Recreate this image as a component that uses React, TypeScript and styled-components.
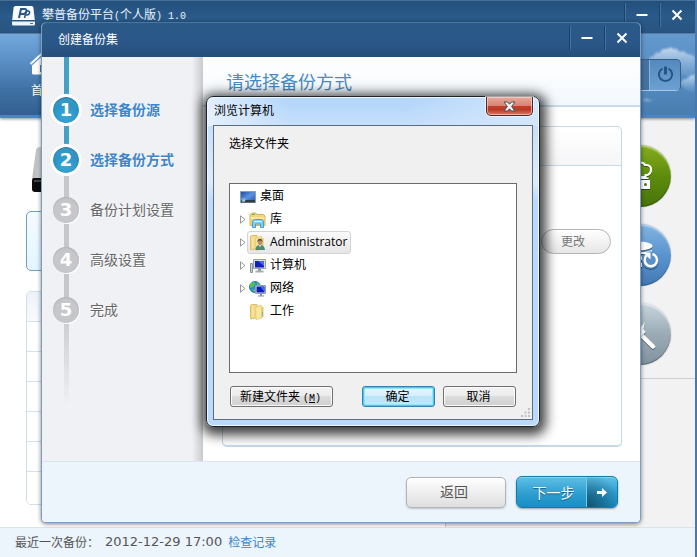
import React from "react";
import styled, { createGlobalStyle, css } from "styled-components";

const sans = `"DejaVu Sans", "Noto Sans CJK SC", sans-serif`;
const treeFont = `"Open Sans", "Noto Sans CJK SC", sans-serif`;
const cjk = `"Noto Sans CJK SC", sans-serif`;

const GlobalStyle = createGlobalStyle`
  *, *::before, *::after { box-sizing: border-box; }
  body { margin: 0; font-family: ${cjk}; font-size: 12px; line-height: 18px; color: #000; }
  button { font: inherit; color: inherit; margin: 0; padding: 0; border: 0; background: none; cursor: pointer; }
  h1, h2, p, ol, ul { margin: 0; padding: 0; font-weight: normal; font-size: inherit; }
  ol, ul { list-style: none; }
  svg { display: block; flex: none; }
`;

const Mono = styled.span`
  font-family: "Liberation Mono", monospace;
  font-size: 10px;
  white-space: pre;
`;

/* ---------- main window ---------- */

const AppWindow = styled.div`
  position: relative;
  display: flex;
  flex-direction: column;
  min-height: 100vh;
  background: #fff;
  border-right: 2px solid #4878ae;
  overflow: hidden;
`;

const TitleBar = styled.header`
  display: flex;
  align-items: center;
  height: 34px;
  padding: 0 1px 2px 12px;
  gap: 7px;
  color: #e8f2fc;
  background: linear-gradient(#6d8fb4 0, #234f7b 1px, #2a5a8a 50%, #29547f);
  border-bottom: 1px solid #5c86b3;
`;

const WindowTitle = styled.h1`
  flex: 1;
`;

const WindowControls = styled.div`
  display: flex;
  padding-bottom: 2px;
`;

const ControlButton = styled.button`
  display: flex;
  align-items: center;
  justify-content: center;
  width: 35px;
  height: 24px;
  padding-right: 1px;
  color: #fff;
  border-left: 1px solid #1c4168;
  box-shadow: inset 1px 0 #4273a4;
`;

const NavBar = styled.nav`
  display: flex;
  align-items: center;
  justify-content: space-between;
  position: relative;
  height: 84px;
  padding: 0 14px 0 29px;
  background: linear-gradient(#72a8dc, #5d92c8 30%, #3f70a4 70%, #345f90);
  border-bottom: 3px solid #4387cb;
  box-shadow: 0 1px 3px rgba(0, 0, 0, 0.45);
`;

const Sky = styled.div`
  position: absolute;
  inset: 0 0 0 auto;
  width: 160px;
  background: linear-gradient(#6499ce, #548abf 60%, #497daf);
  svg { width: 100%; height: 100%; }
`;

const HomeButton = styled.button`
  display: flex;
  flex-direction: column;
  align-items: center;
  gap: 6px;
  color: #fff;
`;

const SessionControls = styled.div`
  position: relative;
  display: flex;
  width: 90px;
  height: 32px;
  justify-content: flex-end;
  background: #4472a0;
  border: 1px solid #365f8a;
  border-bottom-color: #a7c7e6;
  border-radius: 5px;
  overflow: hidden;
`;

const PowerButton = styled.button`
  display: flex;
  align-items: center;
  justify-content: center;
  width: 31px;
  border-left: 1px solid #8db4da;
  background: linear-gradient(#5489bf, #6da0d2);
  color: #245585;
`;

const Workspace = styled.div`
  flex: 1;
  display: flex;
`;

const Overview = styled.main`
  flex: 1;
  padding: 29px 20px 22px 26px;
`;

const DeviceRow = styled.div`
  height: 45px;
  padding-left: 6px;
`;

const SummaryCard = styled.div`
  height: 60px;
  margin-top: 19px;
  border: 1px solid #6d9fcd;
  border-radius: 5px;
  background: linear-gradient(#f4fbff, #e4f5ff);
`;

const PlanList = styled.div`
  margin-top: 20px;
  border: 1px solid #d0e0ea;
  border-radius: 5px;
  overflow: hidden;
`;

const PlanRow = styled.div<{ $head?: boolean }>`
  height: 30px;
  border-bottom: 1px solid #d3e2ea;
  background: ${(p) => (p.$head ? "linear-gradient(#eef2f8, #f8fafc)" : "#fff")};
  &:last-child { height: 32px; border-bottom: 0; }
`;

const ActionPanel = styled.aside`
  width: 250px;
  border-left: 1px solid #c5c9ce;
  background: #f2f2f2;
`;

const ActionList = styled.div`
  display: flex;
  flex-direction: column;
  align-items: flex-end;
  gap: 17px;
  padding: 27px 24px 13px 0;
  border-bottom: 1px solid #cfcfcf;
`;

const tones = {
  green: "linear-gradient(#86ad1c, #5d8c0c 50%, #48730a)",
  blue: "linear-gradient(#83b4e0, #5a94cf 50%, #4279b5)",
  gray: "linear-gradient(#c8d5dd, #9aabb6 50%, #7f929f)",
};

const RoundAction = styled.button<{ $tone: keyof typeof tones }>`
  display: flex;
  align-items: center;
  justify-content: center;
  width: 62px;
  height: 62px;
  border-radius: 50%;
  background: ${(p) => tones[p.$tone]};
  box-shadow: inset 0 2px 1px rgba(255, 255, 255, 0.4), inset 0 -1px 1px rgba(0, 0, 0, 0.3), 0 0 2px rgba(0, 0, 0, 0.2);
  svg { filter: drop-shadow(0 1px 0 rgba(0, 0, 0, 0.45)); }
`;

const StatusBar = styled.footer`
  display: flex;
  align-items: center;
  height: 30px;
  padding: 0 15px 2px;
  gap: 6px;
  background: #ecf4fc;
  border-top: 1px solid #d9e4ee;
  color: #555;
`;

const StatusTime = styled.time`
  font-family: ${sans};
  font-size: 13px;
`;

const StatusLink = styled.a`
  color: #3a85cc;
  text-decoration: none;
`;

/* ---------- wizard ---------- */

const Wizard = styled.section`
  position: absolute;
  inset: 22px 54px 34px 41px;
  display: flex;
  flex-direction: column;
  border: 1px solid #7b9fc4;
  border-top-color: #4a76a4;
  border-radius: 5px;
  overflow: hidden;
  background: #fff;
  box-shadow: 0 1px 4px rgba(0, 0, 0, 0.5);
`;

const WizardHeader = styled.header`
  display: flex;
  align-items: center;
  height: 34px;
  flex: none;
  padding: 0 1px 2px 16px;
  color: #fff;
  background: linear-gradient(#2a5a88, #2a5788 60%, #264e79);
`;

const WizardBody = styled.div`
  flex: 1;
  display: flex;
`;

const Sidebar = styled.nav`
  width: 161px;
  background: linear-gradient(90deg, transparent 150px, #c9cacd), #eff1f5;
`;

const Steps = styled.ol`
  display: flex;
  flex-direction: column;
  height: 348px;
  padding: 28px 0 0 8px;
  background: linear-gradient(#45a0c6 103px, #c6c7ca 103px, #c6c7ca 250px, rgba(198, 199, 202, 0)) 22px 0 / 5px 100% no-repeat;
`;

const Step = styled.li<{ $done?: boolean }>`
  display: flex;
  align-items: center;
  height: 50px;
  gap: 8px;
  font-size: 14px;
  color: #666;
  text-shadow: 0 1px #fff;
  ${(p) => p.$done && css`
    color: #3d86ca;
    font-weight: bold;
  `}
`;

const StepLabel = styled.span`
  padding-bottom: 2px;
`;

const StepNumber = styled.span<{ $done?: boolean }>`
  display: flex;
  align-items: center;
  justify-content: center;
  width: 32px;
  height: 32px;
  border: 3px solid ${(p) => (p.$done ? "#fff" : "transparent")};
  border-radius: 50%;
  font: bold 18px/26px "DejaVu Sans", sans-serif;
  color: #fff;
  background: ${(p) => (p.$done ? "radial-gradient(circle at 50% 75%, #37a8d8, #2b94c5 55%, #52a9cc)" : "#c6c7cb")} padding-box;
  box-shadow: ${(p) => (p.$done ? "0 0 1px #d5dbe2, inset 0 1px 2px rgba(0, 70, 110, 0.5)" : "inset 0 1px 1px #b3b4b8")};
  ${(p) => !p.$done && css`
    width: 26px;
    height: 26px;
    margin: 0 3px;
    border: 0;
    box-shadow: inset 0 1px 2px #b0b1b5, 1px 1px #fff;
  `}
  text-shadow: none;
`;

const Content = styled.div`
  flex: 1;
  display: flex;
  flex-direction: column;
`;

const ContentTitle = styled.h2`
  height: 50px;
  padding: 11px 0 0 23px;
  font-size: 18px;
  line-height: 26px;
  color: #4a8bc5;
  background: linear-gradient(#fff, #f2f8fd);
  border-bottom: 2px solid #c9dbe9;
`;

const OptionPanel = styled.div`
  flex: 1;
  margin: 19px 18px 14px 19px;
  border: 1px solid #c6d9e8;
  border-bottom-width: 2px;
  border-radius: 5px;
`;

const OptionHead = styled.div`
  height: 39px;
  border-radius: 5px 5px 0 0;
  background: linear-gradient(#fff, #f6f6f8);
  border-bottom: 1px solid #c9d9e7;
`;

const OptionRow = styled.div`
  display: flex;
  justify-content: flex-end;
  padding: 63px 10px 0 0;
`;

const PillButton = styled.button`
  width: 70px;
  height: 25px;
  padding: 0 6px 2px 0;
  border: 1px solid #b5b5b5;
  border-radius: 13px;
  background: linear-gradient(#fff, #e6e6e6);
  color: #777;
`;

const WizardFooter = styled.footer`
  display: flex;
  justify-content: flex-end;
  align-items: center;
  flex: none;
  gap: 10px;
  height: 61px;
  padding-right: 22px;
  background: #ecf4fc;
  border-top: 1px solid #dce4ec;
`;

const BackButton = styled.button`
  width: 100px;
  height: 31px;
  padding: 0 4px 2px 0;
  border: 1px solid #b4b4b4;
  border-radius: 5px;
  background: linear-gradient(#fff, #dedede);
  box-shadow: 0 1px 2px rgba(0, 0, 0, 0.2);
  font-size: 14px;
  color: #555;
`;

const NextButton = styled.button`
  display: flex;
  width: 102px;
  height: 32px;
  border: 1px solid #147ba8;
  border-radius: 6px;
  overflow: hidden;
  background: linear-gradient(#5fbfe6, #2f9ed0 55%, #178fc4);
  box-shadow: 0 1px 2px rgba(0, 0, 0, 0.35), inset 0 1px #86d2ef;
  color: #fff;
  font-size: 14px;
  line-height: 30px;
  text-shadow: 0 1px 1px #0d5f86;
`;

const NextLabel = styled.span`
  flex: 1;
  padding-left: 4px;
`;

const NextArrow = styled.span`
  display: flex;
  align-items: center;
  justify-content: center;
  width: 31px;
  height: 30px;
  border-left: 1px solid #7ccaea;
  background: radial-gradient(circle at 0 100%, #12536f, rgba(18, 83, 111, 0) 34px);
`;

/* ---------- folder dialog ---------- */

const Dialog = styled.section`
  position: absolute;
  top: 96px;
  left: 206px;
  width: 334px;
  padding: 0 6px 6px;
  border: 1px solid #1c232b;
  border-radius: 7px;
  background:
    linear-gradient(90deg, #e3f0ff, rgba(200, 225, 252, 0) 25%, rgba(200, 225, 252, 0) 60%, #d3e7fd) top / 100% 29px no-repeat,
    linear-gradient(#b0d4fa, #c6dffb 28px, #dcecfd 85px, #b9d9fd 105px, #b9d9fd);
  box-shadow: inset 0 0 0 1px #eef7ff, 1px 3px 12px 5px rgba(0, 0, 0, 0.75);
`;

const DialogHeader = styled.header`
  display: flex;
  justify-content: space-between;
  height: 28px;
`;

const DialogTitle = styled.h2`
  padding: 4px 1px;
`;

const CloseButton = styled.button`
  display: flex;
  align-items: center;
  justify-content: center;
  width: 47px;
  height: 19px;
  border: 1px solid #56222a;
  border-top: 0;
  border-radius: 0 0 5px 5px;
  background: linear-gradient(#e9aa9d, #d88373 48%, #c3402b 50%, #b93a25 70%, #dd7a62);
  box-shadow: inset 0 0 0 1px rgba(255, 220, 210, 0.6), 0 0 0 1px rgba(255, 255, 255, 0.6);
`;

const DialogBody = styled.div`
  display: flex;
  flex-direction: column;
  position: relative;
  padding: 8px 15px 12px;
  border: 1px solid #5d6b7a;
  background: #f0f0f0;
`;

const Prompt = styled.p`
  height: 49px;
`;

const Tree = styled.ul`
  height: 190px;
  padding: 1px 0 0 10px;
  border: 1px solid #6a6c70;
  background: #fff;
`;

const TreeRow = styled.li<{ $child?: boolean }>`
  display: flex;
  align-items: center;
  height: 23px;
  gap: ${(p) => (p.$child ? "1px" : "0")};
`;

const Expander = styled.button`
  width: 6px;
  height: 9px;
`;

const ExpanderGap = styled.span`
  width: 6px;
`;

const TreeItem = styled.button<{ $root?: boolean; $selected?: boolean }>`
  display: flex;
  align-items: center;
  gap: 4px;
  height: 23px;
  padding: ${(p) => (p.$root ? "0" : "0 3px 0 1px")};
  border: 1px solid transparent;
  border-width: ${(p) => (p.$root ? "0" : "1px")};
  border-radius: 3px;
  font-family: ${treeFont};
  ${(p) => p.$selected && css`
    border-color: #d5d5d5;
    background: linear-gradient(#fafafa, #e6e6e6);
  `}
`;

const TreeLabel = styled.span`
  padding-bottom: 2px;
`;

const DialogActions = styled.div`
  display: flex;
  gap: 8px;
  margin-top: 13px;
  padding: 0 1px;
`;

const DialogButton = styled.button<{ $wide?: boolean; $primary?: boolean }>`
  width: ${(p) => (p.$wide ? "103px" : "73px")};
  height: 21px;
  padding: 0 2px 1px 0;
  line-height: 18px;
  border: 1px solid ${(p) => (p.$primary ? "#3c7fb1" : "#707070")};
  border-radius: 3px;
  background: ${(p) =>
    p.$primary
      ? "linear-gradient(#e6f6fe, #d5effc 50%, #b9e3f8 50%, #c3e9fa)"
      : "linear-gradient(#f3f3f3, #ebebeb 50%, #dddddd 50%, #cfcfcf)"};
  box-shadow: ${(p) => (p.$primary ? "inset 0 0 0 1px #43cdf3, inset 0 0 0 2px #9be3f8" : "inset 0 0 0 1px #fbfbfb")};
  &:first-child { margin-right: auto; }
`;

const ShortcutHint = styled(Mono)`
  margin-left: 3px;
`;

const ResizeGrip = styled.div`
  position: absolute;
  right: 2px;
  bottom: 2px;
`;

/* ---------- icons ---------- */

const LogoIcon = () => (
  <svg width="23" height="20" viewBox="0 0 23 20" aria-hidden="true">
    <path d="M3.5 0h16q1.6 0 1.9 1.6L22.8 14H.2L1.6 1.6Q1.900 0 3.500 0Z" fill="#f7fbff" />
    <path d="M0 15.500h23v2.500q0 1.500-1.500 1.500h-20Q0 19.500 0 18Z" fill="#edf5fc" />
    <path d="M18 17h3v1h-3z" fill="#4d7ba8" />
    <path d="M7 12 9 3h3.500q2.500 0 2 2.300T11.500 8H8.500" fill="none" stroke="#275484" strokeWidth="2" />
    <path d="M12.500 12 14 6m0-1h2q2 0 1.500 2T15 9h-2" fill="none" stroke="#275484" strokeWidth="1.500" />
  </svg>
);

const MinusIcon = () => (
  <svg width="12" height="12" viewBox="0 0 12 12" aria-hidden="true">
    <path d="M0.500 6h11" stroke="#fff" strokeWidth="2" />
  </svg>
);

const CrossIcon = () => (
  <svg width="12" height="12" viewBox="0 0 12 12" aria-hidden="true">
    <path d="M1.500 1.500l9 9M10.500 1.500l-9 9" stroke="#fff" strokeWidth="2" />
  </svg>
);

const HomeIcon = () => (
  <svg width="28" height="24" viewBox="0 0 28 24" aria-hidden="true">
    <path d="M1.500 13 14 1.500 26.500 13" fill="none" stroke="#fff" strokeWidth="2" />
    <path d="M3 14.500 14 4.500l11 10V22q0 1.500-1.500 1.500h-19Q3 23.500 3 22Z" fill="#fff" />
    <path d="M11 14h6v7h-6z" fill="#4a7db2" />
  </svg>
);

const Clouds = () => (
  <svg viewBox="0 0 160 81" preserveAspectRatio="none" aria-hidden="true">
    <defs>
      <filter id="soft" x="-20%" y="-20%" width="140%" height="140%">
        <feGaussianBlur stdDeviation="0.900" />
      </filter>
      <linearGradient id="cloud" x2="0" y2="1">
        <stop stopColor="#cfe1f2" stopOpacity="0.900" />
        <stop offset="1" stopColor="#8bb4dc" stopOpacity="0.150" />
      </linearGradient>
    </defs>
    <g fill="url(#cloud)" filter="url(#soft)">
      <path d="M114 26q0-4 5-4 1-5 6-3 1-5 7-4 3-3 7 0 4-1 5 3 6-2 8 2 5 0 8 3v22q-10-2-17-7-14-8-29-12Z" />
      <path d="M145 50q3-6 7-5 2-4 8-4v17q-8 0-15-8Z" />
      <path d="M107 66q6-2 11 1l-6 1Z" />
    </g>
  </svg>
);

const PowerIcon = () => (
  <svg width="17" height="17" viewBox="0 0 17 17" fill="none" stroke="currentColor" strokeWidth="2" aria-hidden="true">
    <path d="M5.500 2.600a6.600 6.600 0 1 0 6 0" />
    <path d="M8.500 0.500v8" strokeWidth="3" />
  </svg>
);

const DeviceIcon = () => (
  <svg width="40" height="45" viewBox="0 0 40 45" aria-hidden="true">
    <defs>
      <linearGradient id="lid" x2="1">
        <stop stopColor="#b5b5b5" />
        <stop offset="0.400" stopColor="#e9e9e9" />
      </linearGradient>
    </defs>
    <path d="M8 0h24q3 0 3 3l5 30H0L4 3Q4.500 0 8 0Z" fill="url(#lid)" />
    <path d="M2 31h36q2 0 2 3v8q0 3-3 3H3q-3 0-3-3v-8q0-3 2-3Z" fill="#0c0c0c" />
    <path d="M2 33h36v2H2z" fill="#444" />
  </svg>
);

const CloudBackupIcon = () => (
  <svg width="28" height="30" viewBox="0 0 28 30" aria-hidden="true">
    <path d="M8 13.500q-5-.500-5-4.500t5-4q1-3.500 6-3.500 4 0 5 2.500h1.500q4.500.500 4.500 4.500 0 4-3.500 5.500h-2V16h-11Z" fill="none" stroke="#fff" strokeWidth="2.200" strokeLinejoin="round" />
    <path d="M5.500 16.500h17V18h-17zM4.500 19h19.500v9h-19.500z" fill="#fff" />
    <circle cx="19.500" cy="23.500" r="1.500" fill="#497b0c" />
    <path d="M7 22.500h8M7 25h8" stroke="#497b0c" />
  </svg>
);

const RestoreIcon = () => (
  <svg width="38" height="30" viewBox="0 0 38 30" aria-hidden="true">
    <g fill="#fff">
      <ellipse cx="17" cy="6" rx="14.500" ry="4.500" />
      <path d="M3 10q14 5 28 0v4H18q-9 0-15-2.500Z" />
      <path d="M4 14q8 3 17 2.500V20H18q-8 0-14-2Z" />
      <path d="M4 20.500q8 3 17 2.500v4q-10 0-17-3Z" />
    </g>
    <circle cx="29.500" cy="20" r="8.800" fill="#5990ca" />
    <path d="M25.500 15.500a6.200 6.200 0 1 0 6-1.500" fill="none" stroke="#fff" strokeWidth="2.400" />
    <path d="M22 12.500h7.500v7Z" fill="#fff" />
  </svg>
);

const WandIcon = () => (
  <svg width="34" height="34" viewBox="0 0 34 34" aria-hidden="true">
    <path d="m17 17 13 12.500" stroke="#fff" strokeWidth="4.500" strokeLinecap="round" />
    <path d="m17 20 5-5" stroke="#8ea1ae" strokeWidth="1.500" />
    <path d="m14 9 4 1 4-5-1.500 7 2 3-5 5-4-1-5 4 1.500-6L6 13l6-.500Z" fill="#fff" />
  </svg>
);

const ArrowIcon = () => (
  <svg width="10" height="9" viewBox="0 0 10 9" aria-hidden="true">
    <path d="M0 3h5V0l5 4.500L5 9V6H0Z" fill="#fff" />
  </svg>
);

const DialogCloseIcon = () => (
  <svg width="13" height="11" viewBox="0 0 13 11" aria-hidden="true">
    <path d="M1 1h3.500l2 2.200 2-2.200H12L8.600 5.500 12 10H8.500l-2-2.200-2 2.200H1l3.400-4.500Z" fill="#f5f5f5" stroke="#4a4d5c" />
  </svg>
);

const DesktopIcon = () => (
  <svg width="16" height="14" viewBox="0 0 16 14" aria-hidden="true">
    <defs>
      <linearGradient id="screen" x2="1" y2="1">
        <stop stopColor="#1e46a0" />
        <stop offset="0.500" stopColor="#5b92e0" />
        <stop offset="1" stopColor="#1e4fae" />
      </linearGradient>
    </defs>
    <path d="M.5 1.500h15v11H.500z" fill="url(#screen)" stroke="#8c9dad" />
    <path d="M1 10h14v2.500H1z" fill="#303b46" />
    <circle cx="3.500" cy="10" r="2" fill="#64c6f3" />
    <path d="M2.500 9h1v1h-1z" fill="#ef5e28" />
    <path d="M3.500 10h1v1h-1z" fill="#f5d54a" />
  </svg>
);

const LibraryIcon = () => (
  <svg width="17" height="16" viewBox="0 0 17 16" aria-hidden="true">
    <path d="M1 13.500V2.500L2.500 1H7l1 1.500h6.500L16 4v9.500Z" fill="#f0d67b" stroke="#d3b45c" />
    <path d="M1.500 6h14" stroke="#fff5c5" />
    <path d="M3 2h3v1H3z" fill="#5fb16a" />
    <path d="M3.500 15.500V10q0-2.500 3-2.500h5q3 0 3 2.500v5.500h-3V12h-5v3.500Z" fill="#83cdf1" stroke="#4a9ecb" />
    <path d="M5 9.500h8" stroke="#d7f2ff" />
  </svg>
);

const FolderShape = () => (
  <>
    <path d="M1.500 1.500 3 .500h5v13l-6 1.500-.500-.500Z" fill="#f0d885" stroke="#dfc06a" />
    <path d="M8 2.500 12.500 1.500v12.500L7 15.500 6.500 4Z" fill="#f7e7a0" stroke="#e6cd7c" />
    <path d="M13 3h1.500v9.500L13 14Z" fill="#e6c864" />
    <path d="M4 2v11" stroke="#f9ebb0" />
  </>
);

const FolderIcon = () => (
  <svg width="17" height="16" viewBox="0 0 17 16" aria-hidden="true">
    <FolderShape />
    <path d="M13.500 8v4" stroke="#7bb6db" />
  </svg>
);

const UserFolderIcon = () => (
  <svg width="17" height="16" viewBox="0 0 17 16" aria-hidden="true">
    <FolderShape />
    <path d="M6.500 15q0-5 4.500-5t5 5Z" fill="#4d8a77" />
    <path d="m10 10 1 2.500 1-2.500Z" fill="#e9f1ee" />
    <ellipse cx="11" cy="7.300" rx="2.200" ry="2.800" fill="#b98f6c" />
    <path d="M8.300 7Q8.500 3.500 11 3.700T13.500 7q-.800-1.500-2.500-1.500T8.300 7Z" fill="#5f4f40" />
  </svg>
);

const ComputerIcon = () => (
  <svg width="17" height="16" viewBox="0 0 17 16" aria-hidden="true">
    <path d="M1.500 5.500h2v9h-2z" fill="#cdd3d8" stroke="#8b949c" />
    <path d="M1 12h1v1H1z" fill="#3aa64c" />
    <path d="M4.500 1.500h12v9h-12z" fill="#d6dbdf" stroke="#9aa3aa" />
    <path d="M6 3h9v6.500H6z" fill="#1220c0" />
    <path d="M9 3h6v5Z" fill="#4a6ee8" />
    <path d="M9 11h3v2H9z" fill="#88929b" />
    <path d="M6.500 13.500h8" stroke="#a7b0b7" strokeWidth="2" />
  </svg>
);

const NetworkIcon = () => (
  <svg width="17" height="16" viewBox="0 0 17 16" aria-hidden="true">
    <circle cx="6" cy="6" r="5.500" fill="#2f86dc" stroke="#2f74a8" />
    <path d="M2 2q5-2 4 1L4 6 1 7q-1-3 1-5ZM8 1q4 2 3 5L8 4ZM3 8l4 1-1 2Q4 11 3 8Z" fill="#57c64c" />
    <path d="M6.500 4.500h10v8h-10z" fill="#dfe6ee" stroke="#8fa0b8" />
    <path d="M7.500 5.500h8v6h-8z" fill="#0d1cb4" />
    <path d="M11 5.500h4.500V11Z" fill="#3f66e6" />
    <path d="M11 13h2v1.500h2v1H9v-1h2Z" fill="#7794bd" />
  </svg>
);

const ExpandIcon = () => (
  <svg width="6" height="9" viewBox="0 0 6 9" aria-hidden="true">
    <path d="M.5.800v7.400L5 4.500Z" fill="#fff" stroke="#989898" />
  </svg>
);

const GripIcon = () => (
  <svg width="9" height="9" viewBox="0 0 9 9" fill="#c2c2c2" aria-hidden="true">
    <path d="M7 0h2v2H7zM7 3.500h2v2H7zM3.500 3.500h2v2h-2zM7 7h2v2H7zM3.500 7h2v2h-2zM0 7h2v2H0z" />
  </svg>
);

/* ---------- page ---------- */

const steps = [
  { label: "选择备份源", done: true },
  { label: "选择备份方式", done: true },
  { label: "备份计划设置" },
  { label: "高级设置" },
  { label: "完成" },
];

const folders = [
  { label: "库", Icon: LibraryIcon, expandable: true },
  { label: "Administrator", Icon: UserFolderIcon, expandable: true, selected: true },
  { label: "计算机", Icon: ComputerIcon, expandable: true },
  { label: "网络", Icon: NetworkIcon, expandable: true },
  { label: "工作", Icon: FolderIcon },
];

const planRows = [0, 1, 2, 3, 4, 5, 6];

export default function App() {
  return (
    <AppWindow>
      <GlobalStyle />
      <TitleBar>
        <LogoIcon />
        <WindowTitle>
          攀普备份平台<Mono>(</Mono>个人版<Mono>) 1.0</Mono>
        </WindowTitle>
        <WindowControls>
          <ControlButton aria-label="最小化"><MinusIcon /></ControlButton>
          <ControlButton aria-label="关闭"><CrossIcon /></ControlButton>
        </WindowControls>
      </TitleBar>
      <NavBar>
        <Sky><Clouds /></Sky>
        <HomeButton><HomeIcon />首页</HomeButton>
        <SessionControls>
          <PowerButton aria-label="退出"><PowerIcon /></PowerButton>
        </SessionControls>
      </NavBar>
      <Workspace>
        <Overview>
          <DeviceRow><DeviceIcon /></DeviceRow>
          <SummaryCard />
          <PlanList>
            {planRows.map((row) => <PlanRow key={row} $head={row === 0} />)}
          </PlanList>
        </Overview>
        <ActionPanel>
          <ActionList>
            <RoundAction $tone="green" aria-label="备份"><CloudBackupIcon /></RoundAction>
            <RoundAction $tone="blue" aria-label="恢复"><RestoreIcon /></RoundAction>
            <RoundAction $tone="gray" aria-label="工具"><WandIcon /></RoundAction>
          </ActionList>
        </ActionPanel>
      </Workspace>
      <StatusBar>
        <span>最近一次备份：</span>
        <StatusTime dateTime="2012-12-29T17:00">2012-12-29 17:00</StatusTime>
        <StatusLink href="#records">检查记录</StatusLink>
      </StatusBar>

      <Wizard aria-label="创建备份集">
        <WizardHeader>
          <WindowTitle as="h2">创建备份集</WindowTitle>
          <WindowControls>
            <ControlButton aria-label="最小化"><MinusIcon /></ControlButton>
            <ControlButton aria-label="关闭"><CrossIcon /></ControlButton>
          </WindowControls>
        </WizardHeader>
        <WizardBody>
          <Sidebar>
            <Steps>
              {steps.map((step, i) => (
                <Step key={step.label} $done={step.done}>
                  <StepNumber $done={step.done}>{i + 1}</StepNumber>
                  <StepLabel>{step.label}</StepLabel>
                </Step>
              ))}
            </Steps>
          </Sidebar>
          <Content>
            <ContentTitle>请选择备份方式</ContentTitle>
            <OptionPanel>
              <OptionHead />
              <OptionRow><PillButton>更改</PillButton></OptionRow>
            </OptionPanel>
          </Content>
        </WizardBody>
        <WizardFooter>
          <BackButton>返回</BackButton>
          <NextButton>
            <NextLabel>下一步</NextLabel>
            <NextArrow><ArrowIcon /></NextArrow>
          </NextButton>
        </WizardFooter>
      </Wizard>

      <Dialog role="dialog" aria-labelledby="browse-title">
        <DialogHeader>
          <DialogTitle id="browse-title">浏览计算机</DialogTitle>
          <CloseButton aria-label="关闭"><DialogCloseIcon /></CloseButton>
        </DialogHeader>
        <DialogBody>
          <Prompt>选择文件夹</Prompt>
          <Tree>
            <TreeRow>
              <TreeItem $root><DesktopIcon /><TreeLabel>桌面</TreeLabel></TreeItem>
            </TreeRow>
            {folders.map(({ label, Icon, expandable, selected }) => (
              <TreeRow key={label} $child>
                {expandable ? <Expander aria-label={`展开${label}`}><ExpandIcon /></Expander> : <ExpanderGap />}
                <TreeItem $selected={selected}><Icon /><TreeLabel>{label}</TreeLabel></TreeItem>
              </TreeRow>
            ))}
          </Tree>
          <DialogActions>
            <DialogButton $wide>新建文件夹<ShortcutHint>(<u>M</u>)</ShortcutHint></DialogButton>
            <DialogButton $primary>确定</DialogButton>
            <DialogButton>取消</DialogButton>
          </DialogActions>
          <ResizeGrip><GripIcon /></ResizeGrip>
        </DialogBody>
      </Dialog>
    </AppWindow>
  );
}
